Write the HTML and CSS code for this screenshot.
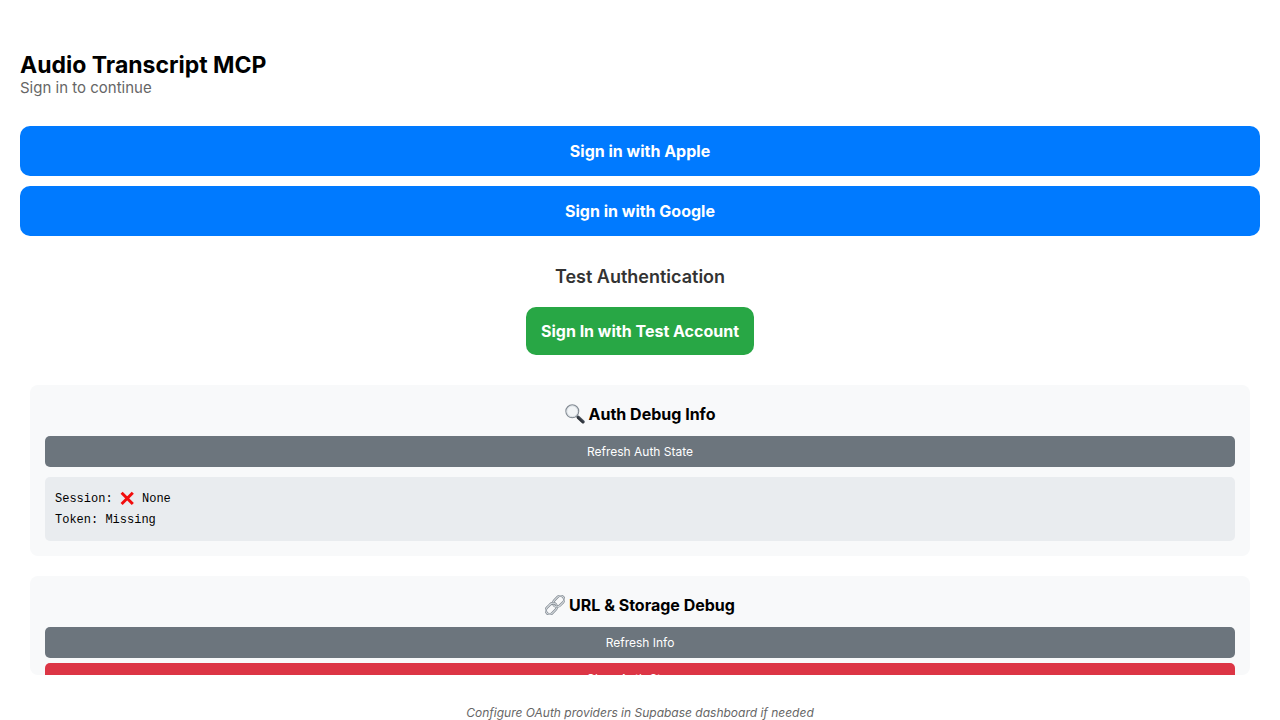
FILE: index.html
```html
<!DOCTYPE html>
<html lang="en">
<head>
<meta charset="utf-8">
<meta name="viewport" content="width=device-width, initial-scale=1">
<title>Audio Transcript MCP</title>
<link rel="stylesheet" href="styles.css">
</head>
<body>
<main class="page">
  <header class="header">
    <h1 class="title">Audio Transcript MCP</h1>
    <p class="subtitle">Sign in to continue</p>
  </header>

  <div class="providers">
    <button class="btn btn-primary" type="button">Sign in with Apple</button>
    <button class="btn btn-primary" type="button">Sign in with Google</button>
  </div>

  <section class="test">
    <h2 class="test-title">Test Authentication</h2>
    <button class="btn btn-test" type="button">Sign In with Test Account</button>
  </section>

  <section class="card">
    <h2 class="card-title">
      <svg class="emoji" viewBox="0 0 20 20" aria-hidden="true">
        <defs>
          <linearGradient id="handle" x1="0" y1="1" x2="1" y2="0">
            <stop offset="0" stop-color="#15181c"/><stop offset=".6" stop-color="#3c434c"/><stop offset="1" stop-color="#8b98a5"/>
          </linearGradient>
        </defs>
        <path d="M11.6 11.8l2 2" stroke="#6e7a86" stroke-width="2"/>
        <path d="M13.4 13.4l4.6 4.4" stroke="url(#handle)" stroke-width="3.4" stroke-linecap="round"/>
        <circle cx="7.3" cy="7.3" r="6.4" fill="#f2f5f7" stroke="#858d95" stroke-width="1.2"/>
        <circle cx="7.3" cy="7.3" r="5.4" fill="none" stroke="#d3d9de" stroke-width=".8"/>
      </svg>
      <span>Auth Debug Info</span>
    </h2>
    <button class="btn-small btn-gray" type="button">Refresh Auth State</button>
    <div class="log">
      <p class="log-line">Session: <svg class="cross" viewBox="0 0 15 15" role="img" aria-label="No"><path d="M1.6 1.8l11.2 11.2M12.8 1.8L1.6 13" stroke="#f20d0d" stroke-width="3"/></svg> None</p>
      <p class="log-line">Token: Missing</p>
    </div>
  </section>

  <section class="card card-last">
    <h2 class="card-title">
      <svg class="emoji" viewBox="0 0 20 20" aria-hidden="true">
        <g fill="none" transform="rotate(-45 10 10)">
          <rect x="-1.4" y="6.2" width="12.4" height="7.6" rx="3.8" stroke="#7b838b" stroke-width="2.4"/>
          <rect x="-1.4" y="6.2" width="12.4" height="7.6" rx="3.8" stroke="#d5dade" stroke-width="1.2"/>
          <rect x="9" y="6.2" width="12.4" height="7.6" rx="3.8" stroke="#7b838b" stroke-width="2.4"/>
          <rect x="9" y="6.2" width="12.4" height="7.6" rx="3.8" stroke="#d5dade" stroke-width="1.2"/>
          <path d="M7 6.2h.2a3.8 3.8 0 0 1 3.8 3.8" stroke="#7b838b" stroke-width="2.4"/>
          <path d="M6.5 6.2h.7a3.8 3.8 0 0 1 3.8 3.8" stroke="#d5dade" stroke-width="1.2"/>
        </g>
      </svg>
      <span>URL &amp; Storage Debug</span>
    </h2>
    <button class="btn-small btn-gray" type="button">Refresh Info</button>
    <button class="btn-small btn-red" type="button">Clear Auth Storage</button>
  </section>

  <footer class="footnote">Configure OAuth providers in Supabase dashboard if needed</footer>
</main>
</body>
</html>
```
FILE: styles.css
```css
* {
  box-sizing: border-box;
}

body,
h1,
h2,
p {
  margin: 0;
}

body {
  background: #fff;
  color: #000;
  font-family: Inter, "Liberation Sans", sans-serif;
  font-size: 16px;
}

button {
  border: 0;
  font-family: inherit;
  cursor: pointer;
}

.page {
  display: flex;
  flex-direction: column;
  height: 100vh;
  padding: 51px 20px 0;
}

.page > * {
  flex-shrink: 0;
}

.title {
  font-size: 23px;
  font-weight: 700;
  line-height: 28px;
}

.subtitle {
  color: #666;
  font-size: 15px;
  line-height: 18px;
}

.providers {
  display: flex;
  flex-direction: column;
  gap: 10px;
  margin-top: 29px;
}

.btn {
  border-radius: 10px;
  color: #fff;
  font-size: 16px;
  font-weight: 700;
  line-height: 20px;
}

.btn-primary {
  padding: 15px;
  background: #007aff;
}

.test {
  display: flex;
  flex-direction: column;
  align-items: center;
  gap: 20px;
  margin-top: 30px;
}

.test-title {
  color: #333;
  font-size: 18px;
  font-weight: 600;
  line-height: 21px;
}

.btn-test {
  padding: 14px 15px;
  background: #28a745;
}

.card {
  display: flex;
  flex-direction: column;
  margin: 30px 10px 0;
  padding: 15px;
  border-radius: 8px;
  background: #f8f9fa;
}

.page > .card-last {
  flex: 0 1 160px;
  min-height: 0;
  margin-top: 20px;
  overflow: hidden;
}

.card-title {
  display: flex;
  justify-content: center;
  align-items: center;
  gap: 4px;
  margin-bottom: 8px;
  font-size: 16px;
  font-weight: 700;
  line-height: 28px;
}

.emoji {
  width: 20px;
  height: 20px;
}

.btn-small {
  flex-shrink: 0;
  margin-bottom: 5px;
  padding: 8px;
  border-radius: 5px;
  color: #fff;
  font-size: 12px;
  line-height: 15px;
}

.btn-gray {
  background: #6c757d;
}

.btn-red {
  background: #dc3545;
}

.log {
  margin-top: 5px;
  padding: 12px 10px 10px;
  border-radius: 5px;
  background: #e9ecef;
  font-family: "Liberation Mono", monospace;
  font-size: 12px;
  line-height: 21px;
}

.cross {
  width: 15px;
  height: 15px;
  vertical-align: middle;
}

.footnote {
  margin-top: 30px;
  color: #666;
  font-size: 12px;
  font-style: italic;
  line-height: 15px;
  text-align: center;
}
```
